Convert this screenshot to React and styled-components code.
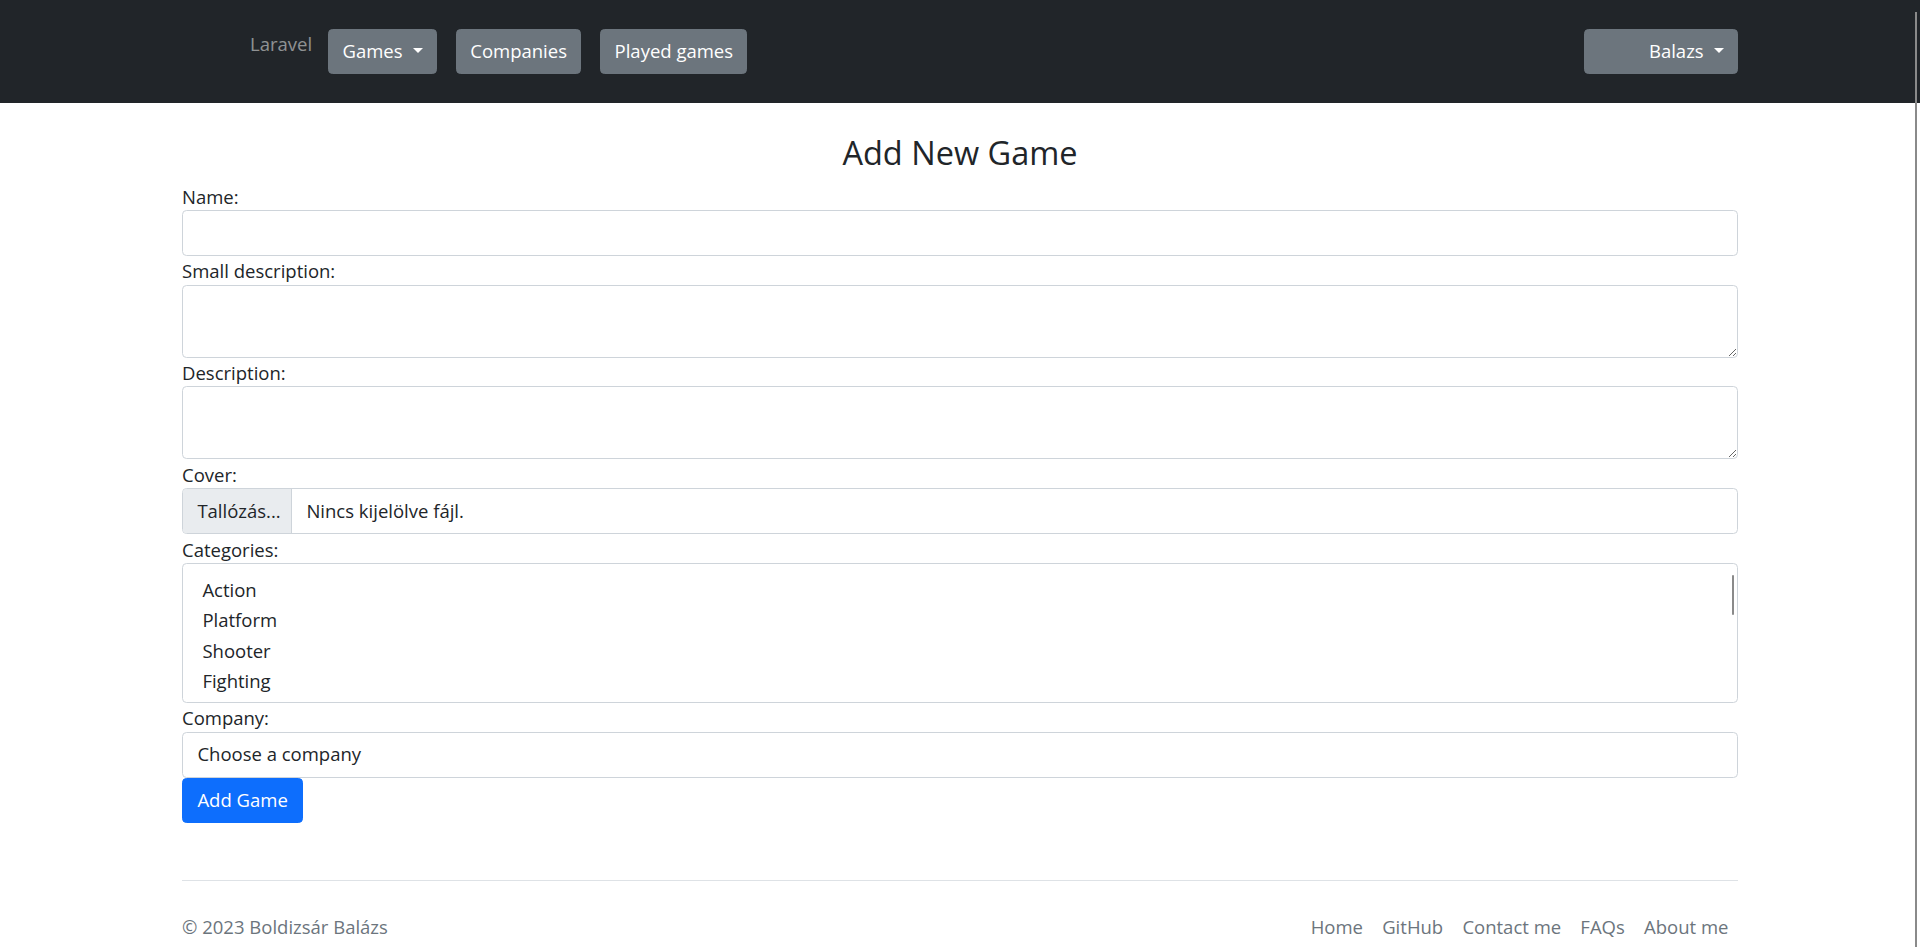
import React from 'react';
import styled, { createGlobalStyle } from 'styled-components';

const GlobalStyle = createGlobalStyle`
  html { scrollbar-width: none; }
  *, *::before, *::after { box-sizing: border-box; }
  body {
    margin: 0;
    background: #fff;
    color: #212529;
    font-family: "Open Sans", "Noto Sans", "Liberation Sans", sans-serif;
    font-size: 18.5px;
    line-height: 28.8px;
  }
`;

const Navbar = styled.header`
  background: #212529;
  height: 103px;
`;

const NavInner = styled.nav`
  width: 1556px;
  margin: 0 auto;
  height: 100%;
  display: flex;
  align-items: center;
  gap: 19.2px;
  padding-left: 68px;
`;

const Brand = styled.a`
  align-self: flex-start;
  margin-top: 29.6px;
  margin-right: -3px;
  color: rgba(255, 255, 255, 0.5);
  text-decoration: none;
  line-height: 28.8px;
`;

const NavButton = styled.a`
  display: inline-block;
  height: 45.6px;
  padding: 7.4px 13.2px;
  line-height: 28.8px;
  border: 1px solid #6c757d;
  border-radius: 4.5px;
  background: #6c757d;
  color: #fff;
  text-decoration: none;
  white-space: nowrap;
  text-align: right;
  min-width: ${p => (p.$wide ? '154px' : '0')};
  margin-left: ${p => (p.$wide ? 'auto' : '0')};

  ${p => p.$caret && `
    &::after {
      content: "";
      display: inline-block;
      margin-left: .55em;
      vertical-align: .25em;
      border-top: .3em solid;
      border-right: .3em solid transparent;
      border-bottom: 0;
      border-left: .3em solid transparent;
    }
  `}
`;

const Container = styled.main`
  width: 1556px;
  margin: 0 auto;
`;

const Title = styled.h2`
  margin: 30px 0 9px;
  font-size: 32.5px;
  font-weight: 400;
  line-height: 1.2;
  text-align: center;
`;

const Form = styled.form`
  display: flex;
  flex-direction: column;
  align-items: stretch;
`;

const Label = styled.label`
  display: block;
  padding-top: 1.5px;
  line-height: 27.3px;
`;

const controlBase = `
  width: 100%;
  border: 1px solid #ced4da;
  border-radius: 4.5px;
  background: #fff;
  color: #212529;
  font: inherit;
  outline: none;
`;

const TextInput = styled.input`
  ${controlBase}
  height: 46px;
  padding: 7.2px 14.4px;
`;

const TextArea = styled.textarea`
  ${controlBase}
  display: block;
  height: 73px;
  padding: 7.2px 14.4px;
  resize: vertical;
`;

const FileField = styled.div`
  ${controlBase}
  display: flex;
  align-items: stretch;
  height: 46px;
  overflow: hidden;
`;

const FileButton = styled.span`
  flex: none;
  width: 109px;
  display: flex;
  align-items: center;
  padding: 0 14.4px;
  background: #e9ecef;
  border-right: 1px solid #ced4da;
  white-space: nowrap;
`;

const FileName = styled.span`
  display: flex;
  align-items: center;
  padding-left: 14.4px;
`;

const ListBox = styled.div`
  ${controlBase}
  position: relative;
  height: 140px;
  padding: 10.6px 14.4px 4px;
  overflow: hidden;
`;

const Option = styled.div`
  height: 30.6px;
  line-height: 30.6px;
  padding-left: 5px;
`;

const ListThumb = styled.span`
  position: absolute;
  top: 11px;
  right: 3px;
  width: 2px;
  height: 40px;
  border-radius: 1px;
  background: #8a8a8a;
`;

const Select = styled.select`
  ${controlBase}
  height: 46px;
  padding: 7.2px 14.4px;
  appearance: none;
  -webkit-appearance: none;
`;

const SubmitButton = styled.button`
  align-self: flex-start;
  height: 45.6px;
  padding: 7.2px 14.4px;
  border: 1px solid #0d6efd;
  border-radius: 4.5px;
  background: #0d6efd;
  color: #fff;
  font: inherit;
  line-height: 28.8px;
`;

const Footer = styled.footer`
  margin-top: 57px;
  border-top: 1px solid #dee2e6;
  padding: 22px 0;
  display: flex;
  justify-content: space-between;
  align-items: center;
`;

const Copyright = styled.p`
  margin: 0;
  color: #6c757d;
`;

const FooterNav = styled.ul`
  display: flex;
  list-style: none;
  margin: 0;
  padding: 0;
`;

const FooterLink = styled.a`
  display: block;
  padding: 9.6px;
  color: #6c757d;
  text-decoration: none;
`;

const PageScrollThumb = styled.div`
  position: fixed;
  top: 12px;
  bottom: 0;
  right: 3px;
  width: 2px;
  background: #8a8a8a;
`;

const categories = ['Action', 'Platform', 'Shooter', 'Fighting'];

const footerLinks = ['Home', 'GitHub', 'Contact me', 'FAQs', 'About me'];

export default function App() {
  return (
    <>
      <GlobalStyle />
      <Navbar>
        <NavInner>
          <Brand href="#">Laravel</Brand>
          <NavButton href="#" $caret>Games</NavButton>
          <NavButton href="#">Companies</NavButton>
          <NavButton href="#">Played games</NavButton>
          <NavButton href="#" $caret $wide>Balazs</NavButton>
        </NavInner>
      </Navbar>
      <Container>
        <Title>Add New Game</Title>
        <Form onSubmit={e => e.preventDefault()}>
          <Label htmlFor="name">Name:</Label>
          <TextInput id="name" type="text" />
          <Label htmlFor="small">Small description:</Label>
          <TextArea id="small" rows={2} />
          <Label htmlFor="desc">Description:</Label>
          <TextArea id="desc" rows={2} />
          <Label>Cover:</Label>
          <FileField>
            <FileButton>Tallózás...</FileButton>
            <FileName>Nincs kijelölve fájl.</FileName>
          </FileField>
          <Label>Categories:</Label>
          <ListBox role="listbox" aria-multiselectable="true">
            {categories.map(c => (
              <Option key={c} role="option">{c}</Option>
            ))}
            <ListThumb />
          </ListBox>
          <Label htmlFor="company">Company:</Label>
          <Select id="company" defaultValue="">
            <option value="">Choose a company</option>
          </Select>
          <SubmitButton type="submit">Add Game</SubmitButton>
        </Form>
        <Footer>
          <Copyright>© 2023 Boldizsár Balázs</Copyright>
          <FooterNav>
            {footerLinks.map(l => (
              <li key={l}><FooterLink href="#">{l}</FooterLink></li>
            ))}
          </FooterNav>
        </Footer>
      </Container>
      <PageScrollThumb />
    </>
  );
}
